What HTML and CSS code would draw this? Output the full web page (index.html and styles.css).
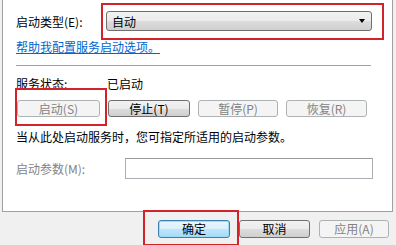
FILE: index.html
```html
<!DOCTYPE html>
<html lang="zh-CN">
<head>
<meta charset="utf-8">
<link rel="stylesheet" href="styles.css">
</head>
<body>
<div class="page">
  <div class="panel">
    <div class="row-type">
      <span class="label">启动类型(E):</span>
      <div class="combo"><span>自动</span><span class="arrow"></span></div>
    </div>
    <a class="link" href="#">帮助我配置服务启动选项。</a>
    <div class="sep"></div>
    <div class="row-status">
      <span class="label w91">服务状态:</span>
      <span>已启动</span>
    </div>
    <div class="row-btns">
      <button class="btn disabled w83">启动(S)</button>
      <button class="btn w82">停止(T)</button>
      <button class="btn disabled w80">暂停(P)</button>
      <button class="btn disabled w81">恢复(R)</button>
    </div>
    <div class="note">当从此处启动服务时，您可指定所适用的启动参数。</div>
    <div class="row-param">
      <span class="label dim">启动参数(M):</span>
      <div class="input"></div>
    </div>
  </div>
  <div class="footer">
    <button class="btn default w72">确定</button>
    <button class="btn w71">取消</button>
    <button class="btn disabled w70">应用(A)</button>
  </div>
  <div class="mark m1"></div>
  <div class="mark m2"></div>
  <div class="mark m3"></div>
</div>
</body>
</html>
```
FILE: styles.css
```css
* { box-sizing: border-box; }
html, body { margin: 0; padding: 0; }
body {
  background: #f0f0f0;
  font-family: "Noto Sans CJK SC", "Liberation Sans", sans-serif;
  font-size: 12px;
  color: #000;
  width: 396px;
  height: 245px;
  overflow: hidden;
}
.page { position: relative; width: 396px; height: 245px; }
.panel {
  margin-left: 2px;
  width: 391px;
  height: 212px;
  background: #fff;
  border: 1px solid #a0a0a0;
  border-top: none;
  padding-left: 13px;
  display: flex;
  flex-direction: column;
}
.row-type {
  display: flex;
  align-items: center;
  height: 20px;
  margin-top: 11px;
}
.row-type .label { width: 90px; }
.combo {
  width: 266px;
  height: 20px;
  border: 1px solid #707070;
  border-radius: 3px;
  background: linear-gradient(#f2f2f2 0%, #ebebeb 50%, #dddddd 51%, #cfcfcf 100%);
  display: flex;
  align-items: center;
  justify-content: space-between;
  padding: 0 6px 0 5px;
  font-size: 12px;
}
.arrow {
  width: 0; height: 0;
  border-left: 3.5px solid transparent;
  border-right: 3.5px solid transparent;
  border-top: 4px solid #000;
}
.link {
  margin-top: 9px;
  color: #0066cc;
  text-decoration: underline;
  line-height: 14px;
  height: 14px;
  align-self: flex-start;
}
.sep {
  margin-top: 11px;
  width: 355px;
  height: 1px;
  background: #a0a0a0;
}
.row-status {
  display: flex;
  align-items: center;
  margin-top: 9px;
  height: 16px;
}
.w91 { width: 91px; }
.row-btns {
  display: flex;
  gap: 8px;
  margin-top: 9px;
  margin-left: 1px;
}
.btn {
  height: 17px;
  border: 1px solid #707070;
  border-radius: 3px;
  background: linear-gradient(#f2f2f2 0%, #ebebeb 50%, #dddddd 51%, #cfcfcf 100%);
  font-family: "Noto Sans CJK SC", "Liberation Sans", sans-serif;
  font-size: 12px;
  line-height: 14px;
  color: #000;
  padding: 0;
  margin: 0;
  display: flex;
  align-items: center;
  justify-content: center;
}
.btn.disabled {
  border-color: #adb2b5;
  background: #f4f4f4;
  color: #838383;
}
.btn.default {
  border-color: #3c7fb1;
  background: linear-gradient(#eaf6fd 0%, #d9f0fc 50%, #bee6fd 51%, #a7d9f5 100%);
  box-shadow: inset 0 0 0 1px #9cdaf8;
}
.w83 { width: 83px; }
.w82 { width: 82px; }
.w80 { width: 80px; }
.w81 { width: 81px; }
.w72 { width: 72px; }
.w71 { width: 71px; }
.w70 { width: 70px; }
.note {
  margin-top: 12px;
  height: 16px;
  line-height: 16px;
}
.row-param {
  display: flex;
  align-items: center;
  margin-top: 13px;
}
.row-param .label { width: 109px; }
.dim { color: #838383; }
.input {
  width: 248px;
  height: 21px;
  border: 1px solid #abadb3;
  border-top-color: #9a9a9a;
  background: #fff;
}
.footer {
  display: flex;
  gap: 9px;
  margin-top: 8px;
  margin-left: 158px;
}
.footer .btn { height: 18px; }
.mark {
  position: absolute;
  border: 2px solid #d2232a;
}
.m1 { left: 101px; top: 3px; width: 283px; height: 37px; }
.m2 { left: 15px; top: 88px; width: 92px; height: 38px; }
.m3 { left: 143px; top: 210px; width: 96px; height: 36px; }
```
